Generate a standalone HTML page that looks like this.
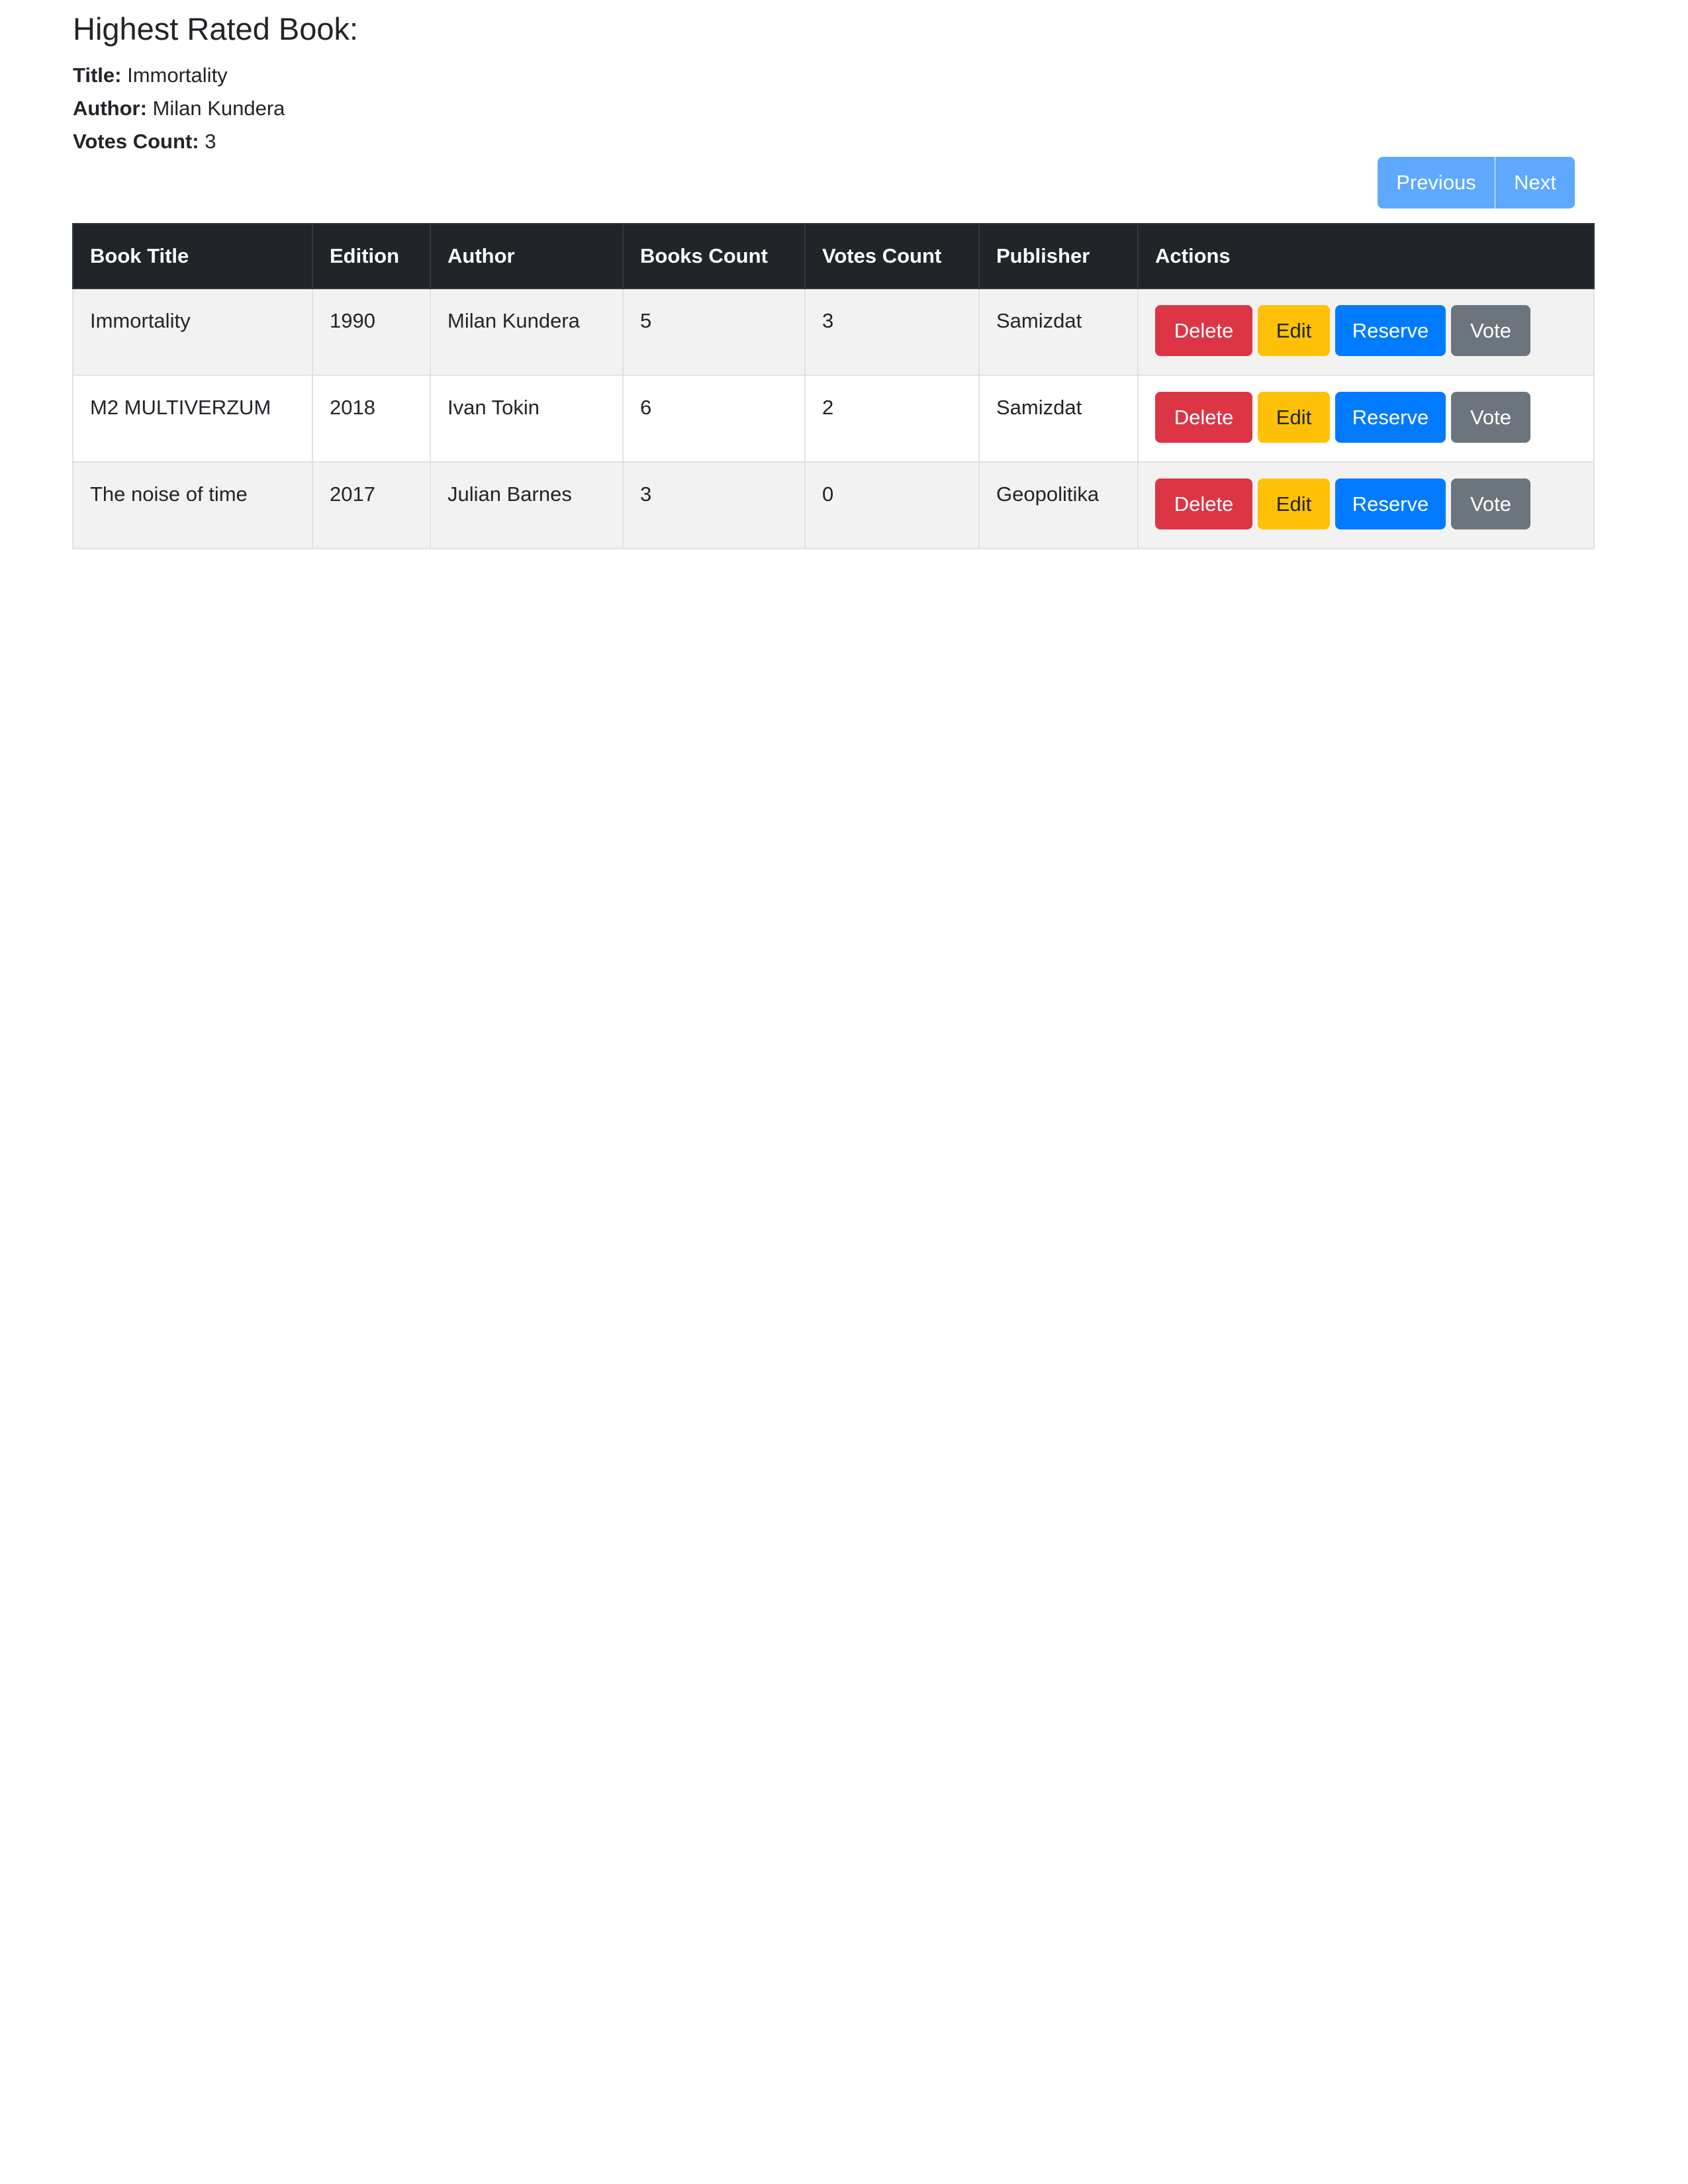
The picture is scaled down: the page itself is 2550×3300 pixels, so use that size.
<!DOCTYPE html>
<html><head><meta charset="utf-8"><style>
body{margin:0;background:#fff;font-family:"Liberation Sans",sans-serif;color:#212529;width:2550px;height:3300px;position:relative;}
h1{position:absolute;left:110px;top:14px;margin:0;font-size:47px;font-weight:normal;line-height:60px}
.info{position:absolute;left:110px;font-size:31px;line-height:40px}
.pg{position:absolute;top:237px;height:78px;background:#5ea9ff;color:#fff;font-size:31px;line-height:78px;text-align:center}
table{position:absolute;left:109px;top:337px;border-collapse:collapse;width:2300px;font-size:31px}
th{background:#212529;color:#fff;text-align:left;font-weight:bold;height:98px;padding:0 25px;border:2px solid #32383e;box-sizing:border-box}
td{padding:0 25px;border:2px solid #dee2e6;height:131px;vertical-align:top;box-sizing:border-box}
td span{display:block;margin-top:30px}
tr.s td{background:#f2f2f2}
.b{display:inline-block;height:77px;line-height:77px;border-radius:8px;color:#fff;text-align:center;margin-top:24px;margin-right:8px;vertical-align:top}
</style></head><body>
<h1>Highest Rated Book:</h1>
<div class="info" style="top:94px"><b>Title:</b> Immortality</div>
<div class="info" style="top:144px"><b>Author:</b> Milan Kundera</div>
<div class="info" style="top:194px"><b>Votes Count:</b> 3</div>
<div class="pg" style="left:2081px;width:177px;border-radius:8px 0 0 8px">Previous</div>
<div class="pg" style="left:2259px;width:120px;border-radius:0 8px 8px 0">Next</div>
<table>
<tr><th style="width:362px">Book Title</th><th style="width:178px">Edition</th><th style="width:291px">Author</th><th style="width:275px">Books Count</th><th style="width:263px">Votes Count</th><th style="width:240px">Publisher</th><th>Actions</th></tr>
<tr class="s"><td><span>Immortality</span></td><td><span>1990</span></td><td><span>Milan Kundera</span></td><td><span>5</span></td><td><span>3</span></td><td><span>Samizdat</span></td><td><div class="b" style="width:147px;background:#dc3545">Delete</div><div class="b" style="width:109px;background:#ffc107;color:#212529">Edit</div><div class="b" style="width:167px;background:#007bff">Reserve</div><div class="b" style="width:120px;background:#6c757d">Vote</div></td></tr>
<tr><td><span>M2 MULTIVERZUM</span></td><td><span>2018</span></td><td><span>Ivan Tokin</span></td><td><span>6</span></td><td><span>2</span></td><td><span>Samizdat</span></td><td><div class="b" style="width:147px;background:#dc3545">Delete</div><div class="b" style="width:109px;background:#ffc107;color:#212529">Edit</div><div class="b" style="width:167px;background:#007bff">Reserve</div><div class="b" style="width:120px;background:#6c757d">Vote</div></td></tr>
<tr class="s"><td><span>The noise of time</span></td><td><span>2017</span></td><td><span>Julian Barnes</span></td><td><span>3</span></td><td><span>0</span></td><td><span>Geopolitika</span></td><td><div class="b" style="width:147px;background:#dc3545">Delete</div><div class="b" style="width:109px;background:#ffc107;color:#212529">Edit</div><div class="b" style="width:167px;background:#007bff">Reserve</div><div class="b" style="width:120px;background:#6c757d">Vote</div></td></tr>
</table>
</body></html>
